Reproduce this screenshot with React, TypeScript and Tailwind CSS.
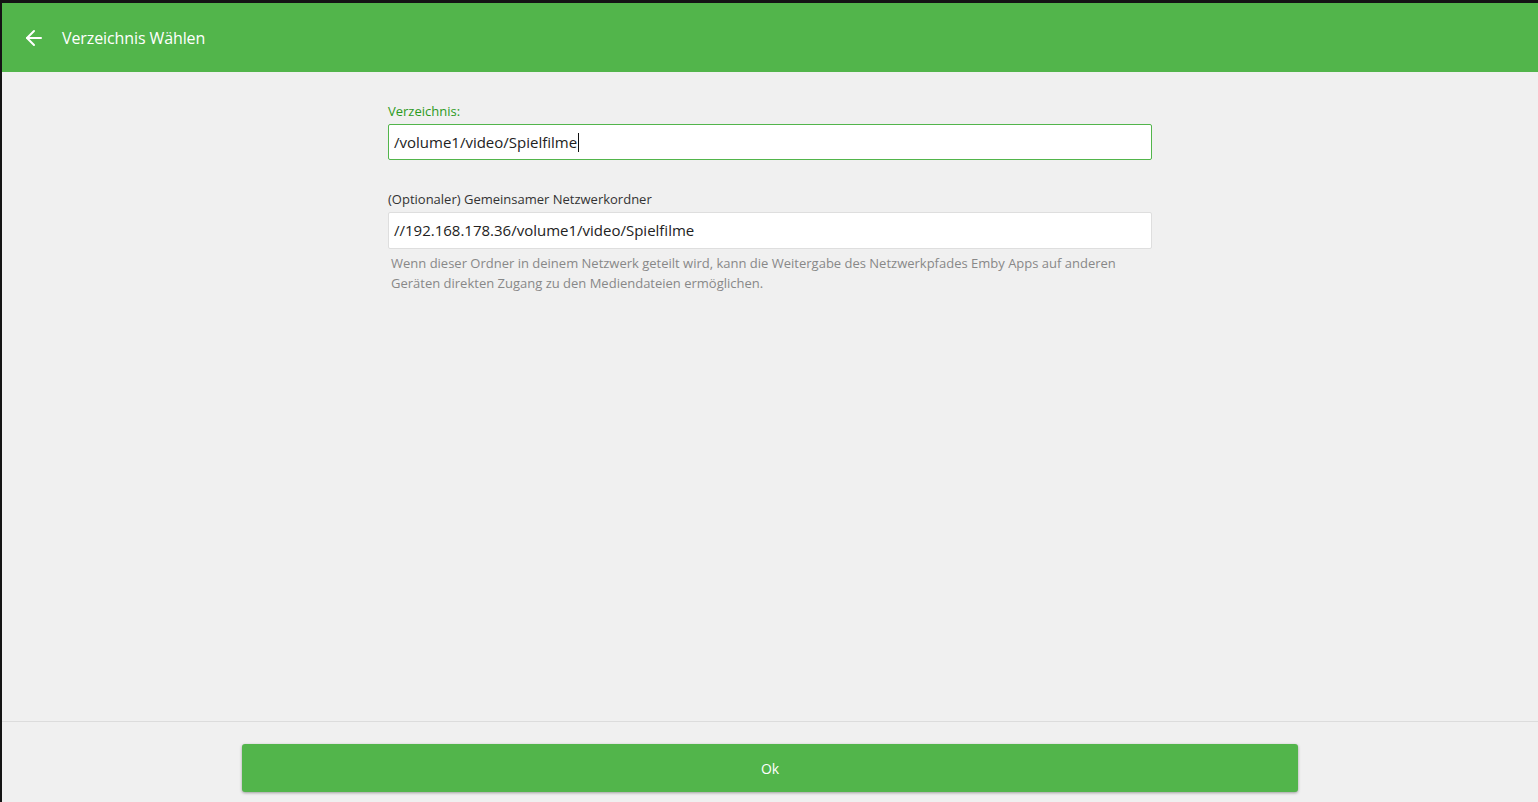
import { ArrowLeft } from 'lucide-react';

export default function App() {
  return (
    <div className="h-[802px] w-[1538px] overflow-hidden bg-[#141414] pl-[2px] pt-[3px]">
      <div className="flex h-[799px] flex-col bg-[#f0f0f0] font-['Open_Sans',sans-serif]">
        <header className="flex h-[69px] shrink-0 items-center bg-[#52b54b] pl-[20px] text-white">
          <ArrowLeft size={24} strokeWidth={2} />
          <h1 className="ml-[16px] text-[16px] tracking-[-0.1px]">Verzeichnis Wählen</h1>
        </header>

        <main className="flex-1">
          <div className="mx-auto w-[764px] pt-[31px]">
            <label className="block text-[13px] leading-[16px] text-[#2c9a22]">Verzeichnis:</label>
            <div className="mt-[5px] flex h-[36px] items-center rounded-[2px] border border-[#52b54b] bg-white px-[5px] text-[15px] text-[#222]">
              /volume1/video/Spielfilme
              <span className="ml-px h-[19px] w-px bg-[#111]" />
            </div>

            <label className="mt-[31px] block text-[13px] leading-[16px] text-[#333]">
              (Optionaler) Gemeinsamer Netzwerkordner
            </label>
            <div className="mt-[5px] flex h-[37px] items-center rounded-[2px] border border-[#dedede] bg-white px-[5px] text-[15px] text-[#222]">
              //192.168.178.36/volume1/video/Spielfilme
            </div>
            <p className="mt-[4px] pl-[3px] text-[13px] leading-[20px] text-[#888]">
              Wenn dieser Ordner in deinem Netzwerk geteilt wird, kann die Weitergabe des Netzwerkpfades Emby Apps auf anderen
              <br />
              Geräten direkten Zugang zu den Mediendateien ermöglichen.
            </p>
          </div>
        </main>

        <footer className="h-[81px] shrink-0 border-t border-[#dcdcdc] pt-[22px]">
          <button className="mx-auto flex h-[48px] w-[1056px] items-center justify-center rounded-[3px] bg-[#52b54b] text-[14px] text-white shadow-[0_1px_3px_rgba(0,0,0,0.35)]">
            Ok
          </button>
        </footer>
      </div>
    </div>
  );
}
